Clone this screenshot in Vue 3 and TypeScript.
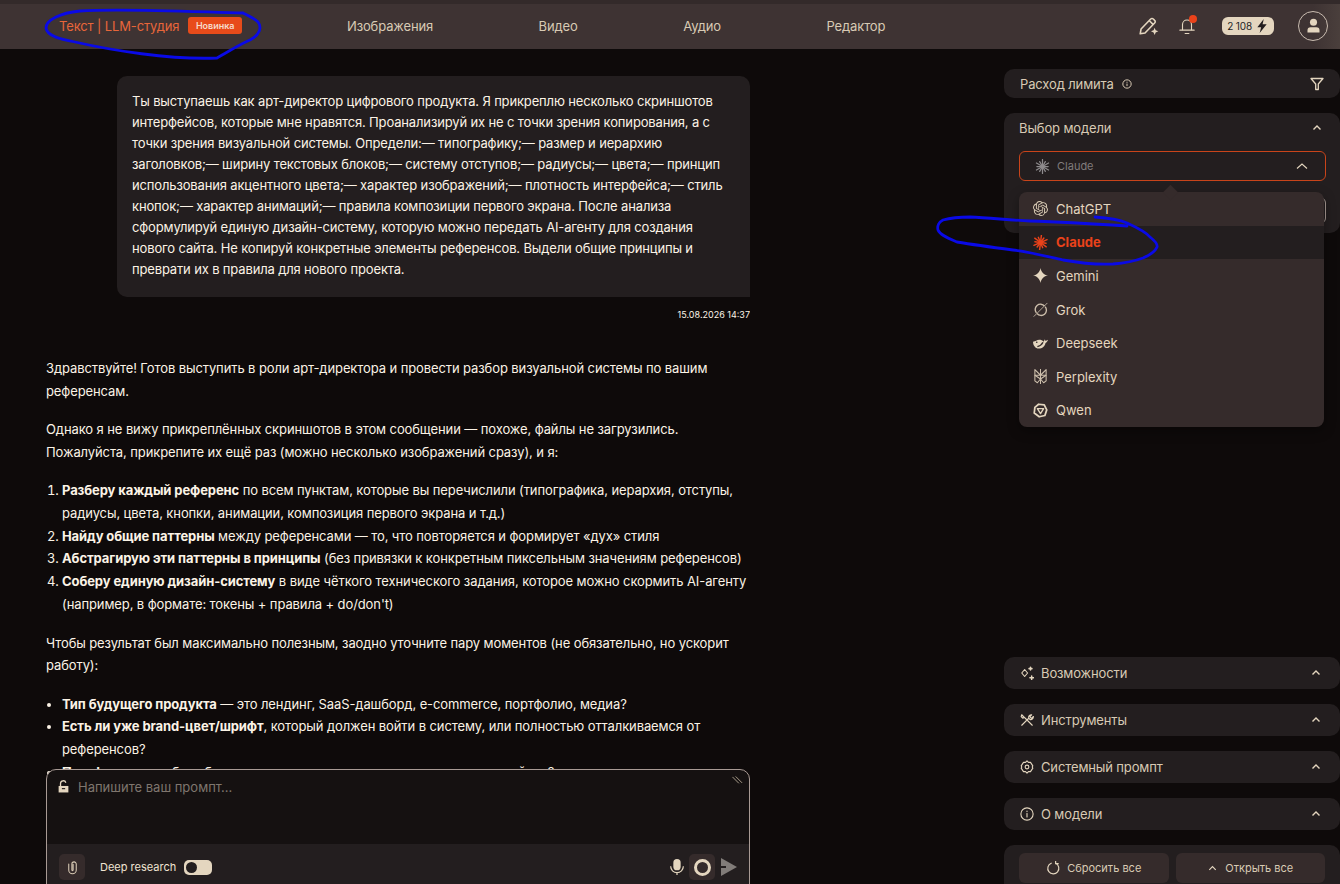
<template>
  <div class="page">
    <header class="topbar">
      <div class="brand">
        <span class="brand__title">Текст | LLM-студия</span>
        <span class="brand__badge">Новинка</span>
      </div>
      <nav class="nav">
        <a v-for="item in navItems" :key="item" class="nav__item">{{ item }}</a>
      </nav>
      <div class="actions">
        <svg class="ic-pen" viewBox="0 0 24 24" fill="none" stroke="#e4d6bf" stroke-width="1.800" stroke-linejoin="round">
          <path d="M2.500 21.500l1-5.500L14.500 4.600a2 2 0 0 1 3 0l1.500 1.500a2 2 0 0 1 0 3L8 20.500z" />
          <path d="M13 6.500l4.500 4.500" />
          <path d="M19 14.500l1.200 3 3 1.200-3 1.200-1.200 3-1.200-3-3-1.200 3-1.200z" fill="#e4d6bf" stroke="none" />
        </svg>
        <span class="bell">
          <svg viewBox="0 0 24 24" fill="none" stroke="#e4d6bf" stroke-width="1.500" stroke-linecap="round">
            <path d="M6 17V10a6 6 0 0 1 12 0v7" />
            <path d="M2.500 17.500h19" />
            <path d="M9.500 22h5" />
          </svg>
          <i class="bell__dot"></i>
        </span>
        <span class="credits">2 108
          <svg viewBox="0 0 24 24" fill="#231e1f"><path d="M15 0L4 14h6.500L8 24l12-15h-7z" /></svg>
        </span>
        <span class="avatar">
          <svg viewBox="0 0 24 24" fill="#e4d6bf"><circle cx="12" cy="7.500" r="5" /><path d="M3.500 22v-3a4.500 4.500 0 0 1 4.500-4.500h8a4.500 4.500 0 0 1 4.500 4.500v3z" /></svg>
        </span>
      </div>
    </header>

    <div class="content">
      <main class="chat">
        <div class="chat__scroll">
          <div class="msg-user">
            <div class="msg-user__bubble">
              Ты выступаешь как арт-директор цифрового продукта. Я прикреплю несколько скриншотов интерфейсов, которые мне нравятся. Проанализируй их не с точки зрения копирования, а с точки зрения визуальной системы. Определи:— типографику;— размер и иерархию заголовков;— ширину текстовых блоков;— систему отступов;— радиусы;— цвета;— принцип использования акцентного цвета;— характер изображений;— плотность интерфейса;— стиль кнопок;— характер анимаций;— правила композиции первого экрана. После анализа сформулируй единую дизайн-систему, которую можно передать AI-агенту для создания нового сайта. Не копируй конкретные элементы референсов. Выдели общие принципы и преврати их в правила для нового проекта.
            </div>
            <div class="msg-user__time">15.08.2026 14:37</div>
          </div>

          <div class="answer">
            <p>Здравствуйте! Готов выступить в роли арт-директора и провести разбор визуальной системы по вашим референсам.</p>
            <p>Однако я не вижу прикреплённых скриншотов в этом сообщении — похоже, файлы не загрузились. Пожалуйста, прикрепите их ещё раз (можно несколько изображений сразу), и я:</p>
            <ol>
              <li><b>Разберу каждый референс</b> по всем пунктам, которые вы перечислили (типографика, иерархия, отступы, радиусы, цвета, кнопки, анимации, композиция первого экрана и т.д.)</li>
              <li><b>Найду общие паттерны</b> между референсами — то, что повторяется и формирует «дух» стиля</li>
              <li><b>Абстрагирую эти паттерны в принципы</b> (без привязки к конкретным пиксельным значениям референсов)</li>
              <li><b>Соберу единую дизайн-систему</b> в виде чёткого технического задания, которое можно скормить AI-агенту (например, в формате: токены + правила + do/don't)</li>
            </ol>
            <p>Чтобы результат был максимально полезным, заодно уточните пару моментов (не обязательно, но ускорит работу):</p>
            <ul>
              <li><b>Тип будущего продукта</b> — это лендинг, SaaS-дашборд, e-commerce, портфолио, медиа?</li>
              <li><b>Есть ли уже brand-цвет/шрифт</b>, который должен войти в систему, или полностью отталкиваемся от референсов?</li>
              <li><b>Платформа</b> — веб, мобильное приложение, десктоп или что-то иное сейчас?</li>
            </ul>
          </div>
        </div>

        <div class="composer">
          <div class="composer__input">
            <svg class="composer__lock" viewBox="0 0 24 24" fill="#e4d6bf">
              <path d="M3 11h18v12H3z" />
              <path d="M6.500 11V6.500a5 5 0 0 1 9.800-1.500" fill="none" stroke="#e4d6bf" stroke-width="2.400" />
              <rect x="9" y="15" width="6" height="2" fill="#151111" />
            </svg>
            <span class="composer__placeholder">Напишите ваш промпт...</span>
            <svg class="composer__resize" viewBox="0 0 12 12" stroke="#b5a894" stroke-width="1"><path d="M0.500 1l7 7M4 0.500l7 7" /></svg>
          </div>
          <div class="composer__bar">
            <span class="icon-btn">
              <svg viewBox="0 0 24 24" fill="none" stroke="#d8cab4" stroke-width="1.700" stroke-linecap="round">
                <path d="M6 6.500v9.500a6 6 0 0 0 12 0V6.500a3.500 3.500 0 0 0-7 0V16a1 1 0 0 0 2 0V7" />
              </svg>
            </span>
            <span class="deep-label">Deep research</span>
            <span class="toggle"><i></i></span>
            <span class="bar-spacer"></span>
            <svg class="ic-mic" viewBox="0 0 24 24" fill="#e4d6bf">
              <rect x="6.500" y="0" width="11" height="17" rx="5.500" />
              <path d="M2.500 11a9.500 9.500 0 0 0 19 0M12 20v4" fill="none" stroke="#e4d6bf" stroke-width="1.800" />
            </svg>
            <span class="icon-btn icon-btn--record"><i></i></span>
            <svg class="ic-send" viewBox="0 0 16 18" fill="#817c79">
              <path d="M0 0l16 9-16 9v-8h5v-2h-5z" />
            </svg>
          </div>
        </div>
      </main>

      <aside class="side">
        <section class="card card--limit">
          <span class="card__title">Расход лимита</span>
          <svg class="ic-info" viewBox="0 0 24 24" fill="none" stroke="#d8cab4" stroke-width="2.400">
            <circle cx="12" cy="12" r="10" />
            <path d="M12 11v6M12 6.500v2.500" />
          </svg>
          <span class="bar-spacer"></span>
          <svg class="ic-filter" viewBox="0 0 14 14" fill="none" stroke="#e4d6bf" stroke-width="1.300" stroke-linejoin="round">
            <path d="M1 1.500h12L8.300 7v5.500H5.700V7z" />
          </svg>
        </section>

        <section class="card card--model">
          <div class="card__head">
            <span class="card__title">Выбор модели</span>
            <svg class="chev" viewBox="0 0 12 12"><path d="M2.500 7.500L6 4l3.500 3.500" /></svg>
          </div>
          <div class="select">
            <svg class="burst" viewBox="0 0 24 24" stroke="#8d8a8c" stroke-width="2" stroke-linecap="round">
              <path v-for="(a, i) in burstAngles" :key="a" :d="i % 2 ? 'M12 12V3' : 'M12 12V0.800'" :transform="`rotate(${a} 12 12)`" />
              <circle cx="12" cy="12" r="3" fill="#8d8a8c" stroke="none" />
            </svg>
            <span class="select__value">Claude</span>
            <svg class="select__chev" viewBox="0 0 14 14"><path d="M2 9.500L7 5l5 4.500" /></svg>
          </div>
          <div class="second-field"></div>
        </section>

        <div class="side__spacer"></div>

        <section v-for="row in collapsed" :key="row.title" class="card card--row">
          <svg class="row-ic" viewBox="0 0 24 24" fill="none" stroke="#e4d6bf" stroke-width="1.900" stroke-linecap="round" stroke-linejoin="round" v-html="row.icon"></svg>
          <span class="card__title">{{ row.title }}</span>
          <span class="bar-spacer"></span>
          <svg class="chev" viewBox="0 0 12 12"><path d="M2.500 7.500L6 4l3.500 3.500" /></svg>
        </section>

        <section class="card card--footer">
          <button class="footer-btn">
            <svg viewBox="0 0 24 24" fill="none" stroke="#e4d6bf" stroke-width="2" stroke-linecap="round">
              <path d="M9 3.800a9.500 9.500 0 1 0 7.500.2" />
              <path d="M16.500 0.500v4H21" />
            </svg>
            Сбросить все
          </button>
          <button class="footer-btn">
            <svg class="footer-btn__chev" viewBox="0 0 12 12"><path d="M2.500 7.500L6 4l3.500 3.500" /></svg>
            Открыть все
          </button>
        </section>

        <div class="dropdown">
          <i class="dropdown__arrow"></i>
          <div
            v-for="m in models"
            :key="m.name"
            class="dropdown__item"
            :class="{ 'dropdown__item--active': m.name === 'Claude' }"
          >
            <svg viewBox="0 0 24 24" v-html="m.icon"></svg>
            {{ m.name }}
          </div>
        </div>
      </aside>
    </div>

    <!-- синие пометки поверх скриншота -->
    <svg class="marks" viewBox="0 0 1340 884" fill="none" stroke="#0a0ae6" stroke-width="2.800" stroke-linecap="round">
      <path d="M243 13C200 12 120 8 80 11C60 13 46 20 46 28C47 36 60 39 75 42C110 50 170 60 217 58C228 52 240 44 250 40C260 35 262 27 258 22C254 18 247 15 243 13" />
      <path d="M1095 217C1110 218 1120 220 1127 223C1138 228 1146 232 1150 237C1155 241 1158 244 1157 247C1155 252 1150 255 1143 258C1135 261 1125 263 1113 264C1095 265 1080 263 1063 260C1045 256 1030 252 1013 250C990 247 975 245 957 242C948 238 940 235 938 230C937 226 939 222 943 220C950 218 960 217 970 217C990 218 1010 220 1030 221C1060 222 1095 224 1127 226" />
    </svg>
  </div>
</template>

<script setup lang="ts">
const navItems = ["Изображения", "Видео", "Аудио", "Редактор"];

const burstAngles = [0, 30, 60, 90, 120, 150, 180, 210, 240, 270, 300, 330];

const burstSvg =
  burstAngles
    .map(
      (a, i) =>
        `<path d="M12 12V${i % 2 ? "3" : "0.500"}" transform="rotate(${a + 7} 12 12)" stroke="#ea421a" stroke-width="2.300" stroke-linecap="round"/>`,
    )
    .join("") + `<circle cx="12" cy="12" r="3.500" fill="#ea421a"/>`;

const models = [
  {
    name: "ChatGPT",
    icon: `<path fill="#d8cab4" d="M22.282 9.821a5.985 5.985 0 0 0-.516-4.91 6.046 6.046 0 0 0-6.51-2.9A6.065 6.065 0 0 0 4.981 4.18a5.985 5.985 0 0 0-3.998 2.9 6.046 6.046 0 0 0 .743 7.097 5.98 5.98 0 0 0 .51 4.911 6.051 6.051 0 0 0 6.515 2.9A5.985 5.985 0 0 0 13.26 24a6.056 6.056 0 0 0 5.772-4.206 5.99 5.99 0 0 0 3.997-2.9 6.056 6.056 0 0 0-.747-7.073zM13.26 22.43a4.476 4.476 0 0 1-2.876-1.04l.141-.081 4.779-2.758a.795.795 0 0 0 .392-.681v-6.737l2.02 1.168a.071.071 0 0 1 .038.052v5.583a4.504 4.504 0 0 1-4.494 4.494zM3.6 18.304a4.47 4.47 0 0 1-.535-3.014l.142.085 4.783 2.759a.771.771 0 0 0 .78 0l5.843-3.369v2.332a.08.08 0 0 1-.033.062L9.74 19.95a4.5 4.5 0 0 1-6.14-1.646zM2.34 7.896a4.485 4.485 0 0 1 2.366-1.973V11.6a.766.766 0 0 0 .388.676l5.815 3.355-2.02 1.168a.076.076 0 0 1-.071 0l-4.83-2.786A4.504 4.504 0 0 1 2.34 7.872zm16.597 3.855l-5.833-3.387L15.119 7.2a.076.076 0 0 1 .071 0l4.83 2.791a4.494 4.494 0 0 1-.676 8.105v-5.678a.79.79 0 0 0-.407-.667zm2.01-3.023l-.141-.085-4.774-2.782a.776.776 0 0 0-.785 0L9.409 9.23V6.897a.066.066 0 0 1 .028-.061l4.83-2.787a4.5 4.5 0 0 1 6.68 4.66zm-12.64 4.135l-2.02-1.164a.08.08 0 0 1-.038-.057V6.075a4.5 4.5 0 0 1 7.375-3.453l-.142.08L8.704 5.46a.795.795 0 0 0-.393.681zm1.097-2.365l2.602-1.5 2.607 1.5v2.999l-2.597 1.5-2.607-1.5z"/>`,
  },
  { name: "Claude", icon: burstSvg },
  {
    name: "Gemini",
    icon: `<path d="M12 0c1 6.500 5.500 11 12 12-6.500 1-11 5.500-12 12-1-6.500-5.500-11-12-12 6.500-1 11-5.500 12-12z" fill="#e4d6bf"/>`,
  },
  {
    name: "Grok",
    icon: `<g fill="none" stroke="#cdbfac" stroke-width="2.200"><path d="M18.500 6.500a8.500 8.500 0 0 0-13 11"/><path d="M6.500 18.500a8.500 8.500 0 0 0 13-11"/><path d="M1 23.500L23 1.500" stroke-width="1.300"/></g>`,
  },
  {
    name: "Deepseek",
    icon: `<path d="M0 9c4 0 6-3 10-3 3 0 5 1 7 3l2-4 1 3 4-2c-1 3-2 4-4 5-1 5-5 9-11 9C4 20 0 15 0 9z" fill="#e4d6bf"/><path d="M7 17c4-1 7-3 9-7" stroke="#352b2b" stroke-width="2.200" fill="none"/><circle cx="6" cy="10" r="1.300" fill="#352b2b"/>`,
  },
  {
    name: "Perplexity",
    icon: `<g fill="none" stroke="#cdbfac" stroke-width="1.700" stroke-linejoin="round"><path d="M12 0v24"/><path d="M3 1l9 9 9-9v9H3z"/><path d="M3 10v9l4 3 5-6 5 6 4-3v-9"/><path d="M3 10l9 6 9-6"/></g>`,
  },
  {
    name: "Qwen",
    icon: `<g fill="none" stroke="#e4d6bf" stroke-linejoin="round"><path d="M9 2l9 1 4 8-3 9-9 2-8-6 1-9z" stroke-width="2.800"/><path d="M7 9h10l-5 8z" stroke-width="2.200"/></g>`,
  },
];

const collapsed = [
  {
    title: "Возможности",
    icon: `<path d="M8 6l5 6-5 6-5-6z"/><path d="M18 2v5M15.500 4.500h5M20 17v6M17 20h6" stroke-width="2.600"/>`,
  },
  {
    title: "Инструменты",
    icon: `<path d="M3 21L15 9M15 9c-1-3 1-6 5-6l-3 3 1 2 2 1 3-3c0 4-3 6-6 5zM21 21L9 9M9 9L7 7M7 7L3 3l-1 3 3 3z"/>`,
  },
  {
    title: "Системный промпт",
    icon: `<circle cx="12" cy="12" r="3.200"/><path d="M12 1.500l2.500 2.500h3.500l2 3 2 3-1 2 1 2-2 3-2 3h-3.500L12 22.500 9.500 20H6l-2-3-2-3 1-2-1-2 2-3 2-3h3.500z"/>`,
  },
  {
    title: "О модели",
    icon: `<circle cx="12" cy="12" r="10.500"/><path d="M12 11v6M12 6.800v1"/>`,
  },
];
</script>

<style>
html,
body {
  margin: 0;
  background: #0e0a0a;
  overflow: hidden;
}
</style>

<style scoped>
.page {
  position: relative;
  width: 1340px;
  height: 884px;
  overflow: hidden;
  background: #0e0a0a;
  color: #fbf3e6;
  font-family: Inter, "Noto Sans", sans-serif;
  font-size: 13px;
  letter-spacing: -0.13px;
}

.topbar {
  height: 43px;
  border-top: 4px solid #332a2a;
  padding-bottom: 2px;
  background: linear-gradient(90deg, #3e3333 98%, #4a3f3c);
  display: flex;
  align-items: center;
  padding-left: 59px;
}

.brand {
  display: flex;
  align-items: center;
  gap: 9px;
  width: 288px;
}

.brand__title {
  color: #e8663a;
  font-size: 13px;
}

.brand__badge {
  background: #e84b1a;
  color: #f6dccb;
  font-size: 9px;
  font-weight: 600;
  letter-spacing: 0;
  padding: 0 7.500px;
  height: 17px;
  line-height: 17px;
  border-radius: 3px;
}

.nav {
  display: flex;
  gap: 105.500px;
  color: #d8cab4;
  font-size: 13px;
}

.actions {
  margin-left: auto;
  display: flex;
  align-items: center;
  padding-right: 12px;
}

.ic-pen {
  width: 21px;
  height: 21px;
}

.bell {
  position: relative;
  width: 18px;
  height: 18px;
  margin-left: 19px;
}

.bell svg {
  display: block;
  width: 18px;
  height: 18px;
}

.bell__dot {
  position: absolute;
  top: -2px;
  right: -1px;
  width: 8px;
  height: 8px;
  border-radius: 50%;
  background: #ea421a;
}

.credits {
  margin-left: 26px;
  display: flex;
  align-items: center;
  justify-content: flex-end;
  width: 52px;
  box-sizing: border-box;
  height: 18px;
  padding-right: 5px;
  gap: 3px;
  border-radius: 6px;
  background: #e4d6bf;
  color: #231e1f;
  font-size: 10px;
}

.credits svg {
  width: 14px;
  height: 14px;
}

.avatar {
  margin-left: 24px;
  width: 30px;
  height: 30px;
  box-sizing: border-box;
  border: 1px solid #c9bcb0;
  border-radius: 50%;
  display: flex;
  align-items: center;
  justify-content: center;
}

.avatar svg {
  width: 17px;
  height: 17px;
}

.content {
  height: 835px;
  display: flex;
}

.chat {
  position: relative;
  width: 704px;
  margin-left: 46px;
  overflow: hidden;
}

.chat__scroll {
  padding-top: 27px;
  line-height: 21px;
}

.msg-user {
  margin-left: 71px;
  letter-spacing: -0.15px;
}

.msg-user__bubble {
  background: #231e1f;
  border-radius: 10px 10px 0 10px;
  padding: 15px 15px 17px;
}

.msg-user__time {
  margin-top: 10px;
  text-align: right;
  font-size: 9px;
  letter-spacing: 0;
  line-height: 16px;
}

.answer {
  margin-top: 34px;
  line-height: 22.750px;
  letter-spacing: -0.1px;
}

.answer p {
  margin: 0 0 15.500px;
}

.answer ol,
.answer ul {
  margin: 0 0 16px;
  padding-left: 16px;
}

.composer {
  position: absolute;
  left: 0;
  right: 0;
  top: 720px;
  height: 130px;
  box-sizing: border-box;
  border: 1px solid #a89a94;
  border-radius: 10px 10px 0 0;
  background: #151111;
}

.composer__input {
  position: relative;
  height: 74px;
  display: flex;
  padding: 9px 10px;
  box-sizing: border-box;
}

.composer__lock {
  width: 13px;
  height: 13px;
  margin-top: 1px;
}

.composer__placeholder {
  margin-left: 8px;
  color: #7f766e;
  letter-spacing: 0;
}

.composer__resize {
  position: absolute;
  top: 6px;
  right: 6px;
  width: 11px;
  height: 11px;
}

.composer__bar {
  height: 46px;
  background: #231e1f;
  display: flex;
  align-items: center;
  padding: 0 12px;
}

.icon-btn {
  width: 26px;
  height: 26px;
  border-radius: 5px;
  background: #352b2b;
  display: flex;
  align-items: center;
  justify-content: center;
}

.icon-btn svg {
  width: 15px;
  height: 15px;
}

.deep-label {
  margin-left: 15px;
  font-size: 11px;
  letter-spacing: 0;
  color: #f0e4d2;
}

.toggle {
  margin-left: 8px;
  width: 28px;
  height: 15px;
  border-radius: 5px;
  background: #e4d6bf;
  display: flex;
  align-items: center;
  padding-left: 2px;
  box-sizing: border-box;
}

.toggle i {
  width: 11px;
  height: 11px;
  border-radius: 50%;
  background: #231e1f;
}

.bar-spacer {
  flex: 1;
}

.ic-mic {
  width: 16px;
  height: 18px;
}

.icon-btn--record {
  margin-left: 4px;
}

.icon-btn--record i {
  box-sizing: border-box;
  width: 17px;
  height: 17px;
  border: 3px solid #e4d6bf;
  border-radius: 50%;
}

.ic-send {
  margin-left: 6px;
  margin-right: 0;
  width: 16px;
  height: 18px;
}

.side {
  position: relative;
  margin-left: 254px;
  width: 336px;
  padding-top: 20px;
  display: flex;
  flex-direction: column;
  box-sizing: border-box;
}

.card {
  background: #231e1f;
  border-radius: 10px;
}

.card__title {
  color: #d8cab4;
  font-size: 13px;
}

.card--limit {
  height: 29px;
  padding: 0 16px;
  display: flex;
  align-items: center;
}

.ic-info {
  width: 10px;
  height: 10px;
  margin-left: 8px;
}

.ic-filter {
  width: 14px;
  height: 14px;
  margin-right: 0;
}

.card--model {
  margin-top: 15px;
  height: 120px;
  padding: 0 15px;
  box-sizing: border-box;
}

.card__head {
  height: 38px;
  padding: 0 2px 9px 0;
  display: flex;
  align-items: center;
  justify-content: space-between;
  box-sizing: border-box;
}

.chev {
  width: 12px;
  height: 12px;
  fill: none;
  stroke: #e4d6bf;
  stroke-width: 1.400;
}

.select {
  height: 30px;
  box-sizing: border-box;
  width: 307px;
  border: 1px solid #c9441a;
  border-radius: 6px;
  display: flex;
  align-items: center;
  padding: 0 16px 0 15px;
  color: #807c7c;
  font-size: 11px;
  letter-spacing: 0;
}

.burst {
  width: 15px;
  height: 15px;
}

.select__value {
  margin-left: 7px;
}

.select__chev {
  margin-left: auto;
  width: 14px;
  height: 14px;
  fill: none;
  stroke: #e4d6bf;
  stroke-width: 1.100;
}

.second-field {
  margin-top: 16px;
  height: 27px;
  width: 307px;
  box-sizing: border-box;
  border: 1px solid #a89a94;
  border-radius: 6px;
}

.side__spacer {
  flex: 0 0 424px;
}

.card--row {
  height: 32px;
  margin-bottom: 15px;
  padding: 0 15px;
  display: flex;
  align-items: center;
  gap: 7px;
}

.card--row .chev {
  margin-right: 3px;
}

.row-ic {
  width: 14px;
  height: 14px;
  margin-left: 1px;
}

.card--footer {
  flex: 1;
  border-radius: 10px 10px 0 0;
  padding: 8px 15px 0;
  display: flex;
  gap: 7px;
  margin-bottom: -10px;
}

.footer-btn {
  width: 150px;
  height: 30px;
  border: 0;
  border-radius: 6px;
  background: #352b2b;
  color: #d8cab4;
  font: inherit;
  font-size: 11px;
  letter-spacing: 0;
  display: flex;
  align-items: center;
  justify-content: center;
  gap: 7px;
}

.footer-btn svg {
  width: 14px;
  height: 14px;
}

.footer-btn .footer-btn__chev {
  width: 11px;
  height: 11px;
  fill: none;
  stroke: #e4d6bf;
  stroke-width: 1.300;
}

.dropdown {
  position: absolute;
  left: 15px;
  top: 143px;
  width: 305px;
  background: #352b2b;
  border-radius: 8px;
  box-shadow: 0 4px 12px rgba(0, 0, 0, 0.35);
}

.dropdown__arrow {
  position: absolute;
  top: -5px;
  left: 146px;
  width: 11px;
  height: 11px;
  background: #352b2b;
  transform: rotate(45deg);
}

.dropdown__item {
  position: relative;
  height: 33.600px;
  display: flex;
  align-items: center;
  gap: 8px;
  padding-left: 14px;
  color: #e4d6bf;
  font-size: 13px;
  letter-spacing: 0;
}

.dropdown__item svg {
  width: 15px;
  height: 15px;
}

.dropdown__item--active {
  background: #231e1f;
  color: #ea421a;
  font-weight: 700;
}

.marks {
  position: absolute;
  left: 0;
  top: 0;
  width: 1340px;
  height: 884px;
  pointer-events: none;
}
</style>
